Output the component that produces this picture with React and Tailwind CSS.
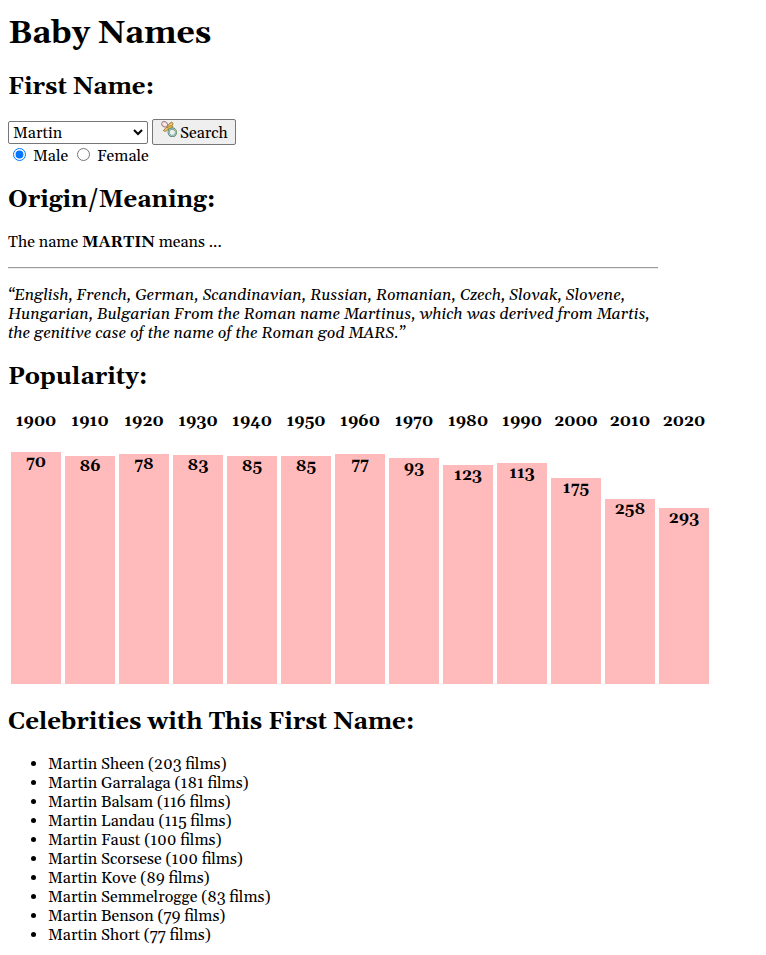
const bars = [
  ['1900', 70, 232],
  ['1910', 86, 228],
  ['1920', 78, 230],
  ['1930', 83, 229],
  ['1940', 85, 228],
  ['1950', 85, 228],
  ['1960', 77, 230],
  ['1970', 93, 226],
  ['1980', 123, 219],
  ['1990', 113, 221],
  ['2000', 175, 206],
  ['2010', 258, 185],
  ['2020', 293, 176],
];

const celebrities = [
  ['Martin Sheen', 203],
  ['Martin Garralaga', 181],
  ['Martin Balsam', 116],
  ['Martin Landau', 115],
  ['Martin Faust', 100],
  ['Martin Scorsese', 100],
  ['Martin Kove', 89],
  ['Martin Semmelrogge', 83],
  ['Martin Benson', 79],
  ['Martin Short', 77],
];

function Heading({ children }) {
  return <h2 className="text-[24px] leading-[27px] font-bold">{children}</h2>;
}

function Pacifier() {
  return (
    <svg width="16" height="16" viewBox="0 0 16 16" className="mt-[-6px] shrink-0">
      <ellipse cx="3.6" cy="3.2" rx="3" ry="2.5" transform="rotate(35 3.6 3.2)" fill="#f9e6e4" stroke="#a67f86" strokeWidth="1" />
      <path d="M2.4 9.4 C3.4 8.6 5 7 6.2 5.6 C7.6 4 8.6 1.8 10.4 1.2 C12 1.2 12.4 2.8 11.4 4 C9.8 6 8.2 8 5.8 9.6 C4.2 10.6 2.8 10.6 2.4 9.4Z" fill="#edc96c" stroke="#8f7030" strokeWidth="0.9" />
      <path d="M6 6.6 L9.6 4.6 L12.2 5.6 L11 7.4 L8.4 8.4Z" fill="#e0b450" stroke="#8f7030" strokeWidth="0.6" />
      <circle cx="11.3" cy="11.3" r="3.7" fill="none" stroke="#54806f" strokeWidth="2.1" />
      <circle cx="11.3" cy="11.3" r="3.6" fill="none" stroke="#a9d3d6" strokeWidth="1" />
      <path d="M13.6 8.5 A3.7 3.7 0 0 1 14.4 13" fill="none" stroke="#a9bf62" strokeWidth="1.1" />
    </svg>
  );
}

export default function App() {
  return (
    <main className="min-h-[955px] overflow-hidden bg-white px-2 pt-4 font-[Gelasio,Georgia,'Liberation_Serif',serif] text-[16px] leading-[19px] whitespace-nowrap text-black">
      <h1 className="text-[32px] leading-[36px] font-bold">Baby Names</h1>

      <div className="mt-[22px]">
        <Heading>First Name:</Heading>
      </div>
      <div className="mt-[18px] flex items-center gap-1">
        <div className="mt-[1px] flex h-[23px] w-[140px] items-center justify-between rounded-[2px] border border-[#767676] bg-white pr-[3px] pl-1">
          <span className="mt-[2px]">Martin</span>
          <svg width="12" height="12" viewBox="0 0 12 12" className="mt-[-2px]">
            <path d="M2 4 L6 8 L10 4" fill="none" stroke="#000" strokeWidth="2" />
          </svg>
        </div>
        <button className="flex h-[26px] w-[84px] items-center gap-[3px] rounded-[2px] border border-[#767676] bg-[#efefef] pl-2">
          <Pacifier />
          <span className="mt-[2px]">Search</span>
        </button>
      </div>
      <div className="mt-[1px] flex h-[21px] items-center pl-[5px]">
        <input type="radio" name="sex" defaultChecked className="mt-[-4px] h-[13px] w-[13px]" />
        <span className="ml-[7px] w-[44px]">Male</span>
        <input type="radio" name="sex" className="mt-[-4px] h-[13px] w-[13px]" />
        <span className="ml-[7px]">Female</span>
      </div>

      <div className="mt-[20px]">
        <Heading>Origin/Meaning:</Heading>
      </div>
      <p className="mt-[19px]">
        The name <b>MARTIN</b> means ...
      </p>
      <div className="mt-[15px] h-[2px] w-[650px] border-t border-b border-t-[#9a9a9a] border-b-[#eeeeee]" />
      <p className="mt-[17px] italic">
        “English, French, German, Scandinavian, Russian, Romanian, Czech, Slovak, Slovene,
        <br />
        Hungarian, Bulgarian From the Roman name Martinus, which was derived from Martis,
        <br />
        the genitive case of the name of the Roman god MARS.”
      </p>

      <div className="mt-[21px]">
        <Heading>Popularity:</Heading>
      </div>
      <div className="mt-[21px] ml-[3px] flex h-[272px] gap-1 text-center font-bold">
        {bars.map(([year, rank, height]) => (
          <div key={year} className="flex w-[50px] flex-col justify-between">
            <div>{year}</div>
            <div className="bg-[#ffbbbb] pt-px" style={{ height }}>
              {rank}
            </div>
          </div>
        ))}
      </div>

      <div className="mt-[25px]">
        <Heading>Celebrities with This First Name:</Heading>
      </div>
      <ul className="mt-[19px] list-disc pl-10">
        {celebrities.map(([name, films]) => (
          <li key={name}>
            {name} ({films} films)
          </li>
        ))}
      </ul>
    </main>
  );
}
